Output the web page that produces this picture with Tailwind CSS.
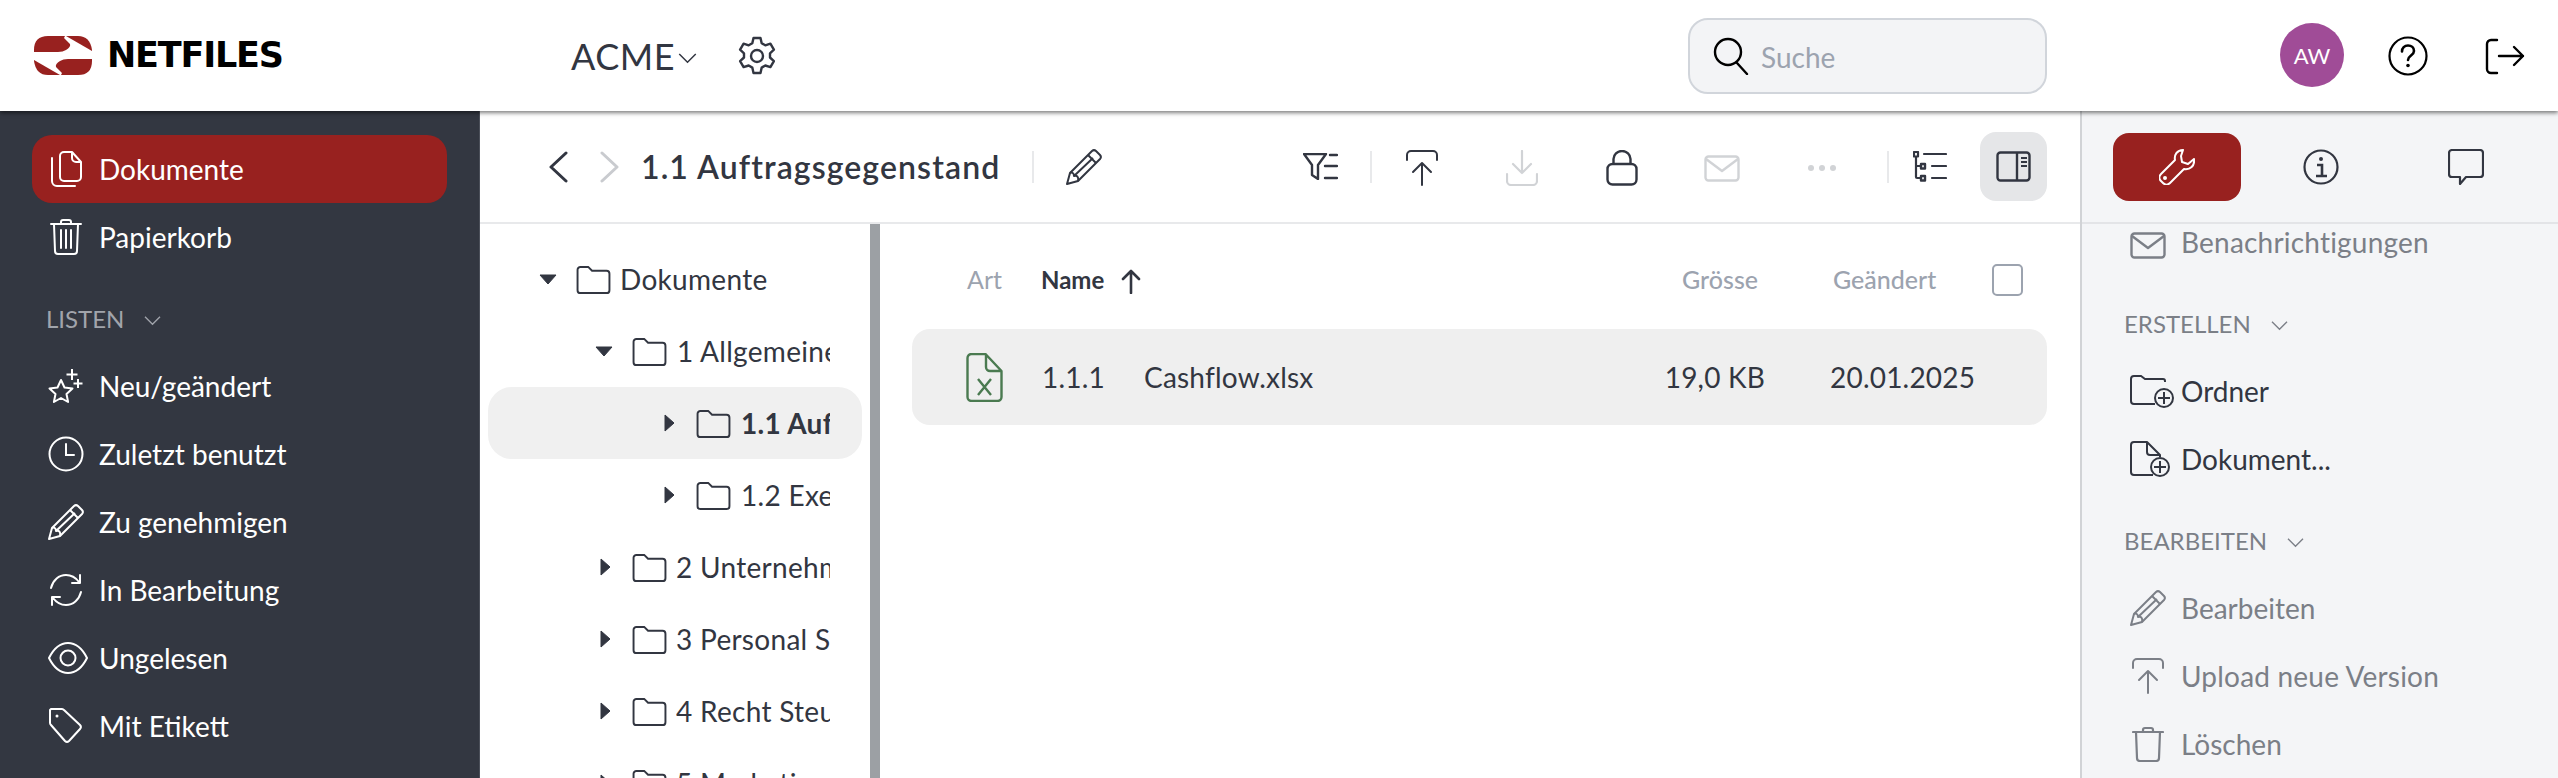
<!DOCTYPE html>
<html lang="de">
<head>
    <meta charset="UTF-8">
    <title>Netfiles</title>
    <script src="https://cdn.jsdelivr.net/npm/@tailwindcss/browser@4"></script>
</head>
<body class="font-['Lato',sans-serif] text-[#323641] bg-white">
    <svg class="hidden">
        <symbol id="folder" viewBox="0 0 36 30"><path d="M1.5 5a3 3 0 0 1 3-3h8l4 4h15a3 3 0 0 1 3 3v17a3 3 0 0 1-3 3h-27a3 3 0 0 1-3-3z" fill="none" stroke="currentColor" stroke-width="2"/></symbol>
        <symbol id="chev" viewBox="0 0 20 12"><path d="M1 1l9 9 9-9" fill="none" stroke="currentColor" stroke-width="1.6"/></symbol>
        <symbol id="tri-down" viewBox="0 0 18 11"><path d="M1 1h16l-8 9z" fill="currentColor" stroke="currentColor" stroke-linejoin="round"/></symbol>
        <symbol id="tri-right" viewBox="0 0 11 18"><path d="M1 1v16l9-8z" fill="currentColor" stroke="currentColor" stroke-linejoin="round"/></symbol>
        <symbol id="pencil" viewBox="0 0 36 36"><g fill="none" stroke="currentColor" stroke-width="2" stroke-linejoin="round"><path d="M1 35l3-11L26 2a3 3 0 0 1 4 0l4 4a3 3 0 0 1 0 4L12 32z"/><path d="M22 6l8 8M4 24c2-1 4 0 4 3 3-1 5 1 4 5M8 27L27 9"/></g></symbol>
        <symbol id="upload" viewBox="0 0 32 36"><g fill="none" stroke="currentColor" stroke-width="2" stroke-linecap="round" stroke-linejoin="round"><path d="M1 10V5a4 4 0 0 1 4-4h22a4 4 0 0 1 4 4v5"/><path d="M16 35V13M7 22l9-9 9 9"/></g></symbol>
    </svg>

    <div class="flex flex-col h-screen overflow-hidden">
        <!-- header -->
        <header class="relative z-10 flex items-center h-[111px] shrink-0 bg-white shadow-[0_2px_4px_rgba(0,0,0,0.5)]">
            <div class="flex items-center pl-[34px] w-[571px]">
                <svg class="w-[58px] h-[39px]" viewBox="0 0 58 39"><g fill="#98211f"><path d="M0 16v-2Q0 0 14 0H31L30 2l6 6Q37 11 32 14 29 16 24 16z"/><path d="M32 0H44Q56 0 58 14v1z"/><path d="M58 23v2q0 14-14 14H27l1-2-6-6q-1-3 4-6 3-2 8-2z"/><path d="M26 39H14Q2 39 0 25v-1z"/></g></svg>
                <span class="ml-[15px] text-[35px] leading-none font-bold tracking-[-1.2px] text-black font-['DejaVu_Sans',sans-serif]">NETFILES</span>
            </div>
            <span class="text-[36px] leading-none tracking-[0.5px]">ACME</span>
            <svg class="w-[21px] h-[11px] ml-[2px] mt-[5px]"><use href="#chev"/></svg>
            <svg class="w-[40px] h-[40px] ml-[39px]" viewBox="0 0 40 40" fill="none" stroke="currentColor" stroke-width="2.4" stroke-linejoin="round"><path d="M16.5 2h7l1.2 5.2 3.6 2.1 5.1-1.6 3.5 6-3.9 3.6v4.2l3.9 3.6-3.5 6-5.1-1.6-3.6 2.1-1.2 5.4h-7l-1.2-5.4-3.6-2.1-5.1 1.6-3.5-6 3.900-3.600v-4.200l-3.900-3.600 3.500-6 5.100 1.600 3.600-2.100z"/><circle cx="20" cy="20" r="6"/></svg>
            <div class="ml-auto mr-[511px] flex items-center w-[359px] h-[76px] bg-[#f3f4f6] border-[2px] border-[#d1d5db] rounded-[20px] pl-[23px]">
                <svg class="w-[36px] h-[38px] text-black" viewBox="0 0 36 38" fill="none" stroke="currentColor" stroke-width="2.4"><circle cx="15" cy="15" r="13"/><path d="M24 26l10 11" stroke-linecap="round"/></svg>
                <span class="ml-[12px] mt-[2px] text-[28px] text-[#9ca3af]">Suche</span>
            </div>
        </header>
        <div class="absolute top-[23px] left-[2280px] z-20 flex items-center">
            <div class="flex items-center justify-center w-[64px] h-[64px] rounded-full bg-[#a04c97] text-white text-[22px]">AW</div>
            <svg class="w-[40px] h-[40px] ml-[44px] mt-[2px] text-black" viewBox="0 0 40 40" fill="none" stroke="currentColor" stroke-width="2.2"><circle cx="20" cy="20" r="18.5"/><path d="M14 15.500c0-3.500 2.500-6 6-6s6 2.300 6 5.500c0 4.500-6 4.500-6 9" stroke-width="2.600" stroke-linecap="round"/><circle cx="20" cy="29.500" r="1.800" fill="currentColor" stroke="none"/></svg>
        </div>
        <svg class="absolute top-[38px] left-[2485px] z-20 w-[40px] h-[37px] text-black" viewBox="0 0 40 37" fill="none" stroke="currentColor" stroke-width="2.4" stroke-linecap="round" stroke-linejoin="round"><path d="M12 2H6a4 4 0 0 0-4 4v25a4 4 0 0 0 4 4h6M14 18h24M29 9l9 9-9 9"/></svg>

        <div class="flex flex-1 min-h-0">
            <!-- sidebar -->
            <aside class="w-[480px] shrink-0 bg-[#333741] border-r border-[#4b4f59] text-white text-[28px] pt-[24px] overflow-hidden">
                <a class="flex items-center h-[68px] mx-[32px] pl-[18px] bg-[#98211f] rounded-[20px]">
                    <svg class="w-[32px] h-[36px] mr-[17px]" viewBox="0 0 32 36" fill="none" stroke="currentColor" stroke-width="2" stroke-linejoin="round"><path d="M10 5a4 4 0 0 1 4-4h8l9 10v15a4 4 0 0 1-4 4H14a4 4 0 0 1-4-4zM22 1v6a4 4 0 0 0 4 4h5"/><path d="M2 7v23a5 5 0 0 0 5 5h18" stroke-linecap="round"/></svg>
                    <span>Dokumente</span>
                </a>
                <a class="flex items-center h-[68px] mx-[32px] pl-[18px]">
                    <svg class="w-[32px] h-[36px] mr-[17px]" viewBox="0 0 32 36" fill="none" stroke="currentColor" stroke-width="2" stroke-linecap="round" stroke-linejoin="round"><path d="M1 5h30M11 5V3a2 2 0 0 1 2-2h6a2 2 0 0 1 2 2v2M4 5l1 27a3 3 0 0 0 3 3h16a3 3 0 0 0 3-3l1-27M11 11v18M16 11v18M21 11v18"/></svg>
                    <span>Papierkorb</span>
                </a>
                <div class="flex items-center h-[66px] mt-[15px] pl-[46px] text-[24px] text-[#a1a4ab]">
                    <span>LISTEN</span>
                    <svg class="w-[17px] h-[10px] ml-[20px] mt-[3px]"><use href="#chev"/></svg>
                </div>
                <a class="flex items-center h-[68px] pl-[48px]">
                    <svg class="w-[36px] h-[36px] mr-[15px]" viewBox="0 0 36 36" fill="none" stroke="currentColor" stroke-width="2" stroke-linejoin="round"><path d="M13 12l3.500 7.500 8 1-6 5.500 1.600 8-7.100-4-7.100 4 1.600-8-6-5.500 8-1zM24 1v11M18.500 6.500h11M30 11v9M25.500 15.500h9"/></svg>
                    <span>Neu/geändert</span>
                </a>
                <a class="flex items-center h-[68px] pl-[48px]">
                    <svg class="w-[36px] h-[36px] mr-[15px]" viewBox="0 0 36 36" fill="none" stroke="currentColor" stroke-width="2" stroke-linecap="round"><circle cx="18" cy="18" r="16.500"/><path d="M18 8v11h8"/></svg>
                    <span>Zuletzt benutzt</span>
                </a>
                <a class="flex items-center h-[68px] pl-[48px]">
                    <svg class="w-[36px] h-[36px] mr-[15px]"><use href="#pencil"/></svg>
                    <span>Zu genehmigen</span>
                </a>
                <a class="flex items-center h-[68px] pl-[48px]">
                    <svg class="w-[36px] h-[36px] mr-[15px]" viewBox="0 0 36 36" fill="none" stroke="currentColor" stroke-width="2" stroke-linecap="round" stroke-linejoin="round"><path d="M3 16C5 8 11 3 18 3c6 0 10 3 13 7M33 20c-2 8-8 13-15 13-6 0-10-3-13-7M32 3v8h-8M4 33v-8h8"/></svg>
                    <span>In Bearbeitung</span>
                </a>
                <a class="flex items-center h-[68px] pl-[48px]">
                    <svg class="w-[40px] h-[32px] mr-[11px]" viewBox="0 0 40 32" fill="none" stroke="currentColor" stroke-width="2"><path d="M1 16C6 6 13 1 20 1s14 5 19 15c-5 10-12 15-19 15S6 26 1 16z"/><circle cx="20" cy="16" r="7.500"/></svg>
                    <span>Ungelesen</span>
                </a>
                <a class="flex items-center h-[68px] pl-[48px]">
                    <svg class="w-[36px] h-[36px] mr-[15px]" viewBox="0 0 36 36" fill="none" stroke="currentColor" stroke-width="2" stroke-linejoin="round"><path d="M3 1h11a3 3 0 0 1 2 1l16 15a3 3 0 0 1 0 4L21 33a3 3 0 0 1-4 0L3 17a3 3 0 0 1-1-2V2z"/><circle cx="9" cy="8" r="1.500" fill="currentColor" stroke="none"/></svg>
                    <span>Mit Etikett</span>
                </a>
            </aside>

            <!-- main -->
            <main class="flex flex-col flex-1 min-w-0">
                <div class="flex items-center h-[113px] shrink-0 pl-[68px] pr-[33px] border-b-2 border-[#e8e9eb]">
                    <svg class="w-[20px] h-[32px]" viewBox="0 0 20 32" fill="none" stroke="currentColor" stroke-width="3" stroke-linecap="round" stroke-linejoin="round"><path d="M18 2L3 16l15 14"/></svg>
                    <svg class="w-[20px] h-[32px] ml-[32px] text-[#c9cbcf]" viewBox="0 0 20 32" fill="none" stroke="currentColor" stroke-width="3" stroke-linecap="round" stroke-linejoin="round"><path d="M2 2l15 14L2 30"/></svg>
                    <span class="ml-[21px] w-[391px] text-[32px] font-semibold tracking-[1.1px] whitespace-nowrap">1.1 Auftragsgegenstand</span>
                    <span class="w-[2px] h-[32px] bg-[#e8e9eb]"></span>
                    <svg class="w-[36px] h-[36px] ml-[32px]"><use href="#pencil"/></svg>
                    <div class="ml-auto flex items-center">
                        <svg class="w-[35px] h-[27px]" viewBox="0 0 35 27" fill="none" stroke="currentColor" stroke-width="2.400" stroke-linecap="round" stroke-linejoin="round"><path d="M1 1h22l-8 11v14l-6-4V12zM27 2h7M22 13h12M22 25h12"/></svg>
                        <span class="w-[2px] h-[32px] bg-[#e8e9eb] ml-[32px]"></span>
                        <div class="flex items-center justify-center w-[100px]"><svg class="w-[32px] h-[36px] mt-[3px]"><use href="#upload"/></svg></div>
                        <div class="flex items-center justify-center w-[100px] text-[#d1d3d6]">
                            <svg class="w-[32px] h-[36px] mt-[3px]" viewBox="0 0 32 36" fill="none" stroke="currentColor" stroke-width="2.200" stroke-linecap="round" stroke-linejoin="round"><path d="M16 1v22M7 14l9 9 9-9M1 24v7a4 4 0 0 0 4 4h22a4 4 0 0 0 4-4v-7"/></svg>
                        </div>
                        <div class="flex items-center justify-center w-[100px]">
                            <svg class="w-[32px] h-[36px] mt-[3px]" viewBox="0 0 32 36" fill="none" stroke="currentColor" stroke-width="2.400"><rect x="1.500" y="14" width="29" height="20.500" rx="5"/><path d="M7.500 14V9a8.500 8 0 0 1 17 0v5"/></svg>
                        </div>
                        <div class="flex items-center justify-center w-[100px] text-[#d1d3d6]">
                            <svg class="w-[36px] h-[27px] mt-[3px]" viewBox="0 0 36 27" fill="none" stroke="currentColor" stroke-width="2.400" stroke-linejoin="round"><rect x="1.500" y="1.500" width="33" height="24" rx="3"/><path d="M2 4l16 12L34 4"/></svg>
                        </div>
                        <div class="flex items-center justify-center w-[100px] gap-[5px] mt-[3px]">
                            <span class="w-[6px] h-[6px] rounded-full bg-[#d1d3d6]"></span>
                            <span class="w-[6px] h-[6px] rounded-full bg-[#d1d3d6]"></span>
                            <span class="w-[6px] h-[6px] rounded-full bg-[#d1d3d6]"></span>
                        </div>
                        <span class="w-[2px] h-[32px] bg-[#e8e9eb] ml-[15px]"></span>
                        <svg class="w-[34px] h-[31px] ml-[24px]" viewBox="0 0 34 31" fill="none" stroke="currentColor" stroke-width="2.200" stroke-linecap="round" stroke-linejoin="round"><rect x="1" y="1" width="4" height="4.500"/><rect x="8" y="13" width="4" height="4.500" stroke-width="2.400"/><rect x="8" y="25" width="4" height="4.500" stroke-width="2.400"/><path d="M3 6v20a1 1 0 0 0 1 1h4M3 15h5M11 3h22M19 15h14M19 27h14"/></svg>
                        <div class="flex items-center justify-center w-[67px] h-[69px] ml-[33px] bg-[#e5e6e8] rounded-[16px]">
                            <svg class="w-[35px] h-[31px]" viewBox="0 0 35 31" fill="none" stroke="currentColor" stroke-width="2.400" stroke-linejoin="round"><rect x="1.500" y="1.500" width="32" height="28" rx="3"/><path d="M21 1.500v28"/><path d="M25 7h6M25 11h6M25 15h6" stroke-width="2"/></svg>
                        </div>
                    </div>
                </div>

                <div class="flex flex-1 min-h-0">
                    <!-- tree -->
                    <div class="w-[390px] shrink-0 px-[8px] pt-[19px] text-[28px] tracking-[0.3px] overflow-hidden">
                        <div class="flex items-center h-[72px] rounded-[24px] pl-[51px] pr-[32px]">
                            <svg class="w-[18px] h-[11px] mr-[19px] shrink-0"><use href="#tri-down"/></svg>
                            <svg class="w-[35px] h-[29px] shrink-0"><use href="#folder"/></svg>
                            <span class="ml-[9px] whitespace-nowrap overflow-hidden">Dokumente</span>
                        </div>
                        <div class="flex items-center h-[72px] rounded-[24px] pl-[107px] pr-[32px]">
                            <svg class="w-[18px] h-[11px] mr-[19px] shrink-0"><use href="#tri-down"/></svg>
                            <svg class="w-[35px] h-[29px] shrink-0"><use href="#folder"/></svg>
                            <span class="ml-[10px] whitespace-nowrap overflow-hidden">1 Allgemeines</span>
                        </div>
                        <div class="flex items-center h-[72px] rounded-[24px] pl-[176px] pr-[32px] bg-[#f0f0f0]">
                            <svg class="w-[11px] h-[18px] mr-[21px] shrink-0"><use href="#tri-right"/></svg>
                            <svg class="w-[35px] h-[29px] shrink-0"><use href="#folder"/></svg>
                            <span class="ml-[10px] font-bold whitespace-nowrap overflow-hidden">1.1 Auftragsgegenstand</span>
                        </div>
                        <div class="flex items-center h-[72px] rounded-[24px] pl-[176px] pr-[32px]">
                            <svg class="w-[11px] h-[18px] mr-[21px] shrink-0"><use href="#tri-right"/></svg>
                            <svg class="w-[35px] h-[29px] shrink-0"><use href="#folder"/></svg>
                            <span class="ml-[10px] whitespace-nowrap overflow-hidden">1.2 Executive Summary</span>
                        </div>
                        <div class="flex items-center h-[72px] rounded-[24px] pl-[112px] pr-[32px]">
                            <svg class="w-[11px] h-[18px] mr-[21px] shrink-0"><use href="#tri-right"/></svg>
                            <svg class="w-[35px] h-[29px] shrink-0"><use href="#folder"/></svg>
                            <span class="ml-[9px] whitespace-nowrap overflow-hidden">2 Unternehmen</span>
                        </div>
                        <div class="flex items-center h-[72px] rounded-[24px] pl-[112px] pr-[32px]">
                            <svg class="w-[11px] h-[18px] mr-[21px] shrink-0"><use href="#tri-right"/></svg>
                            <svg class="w-[35px] h-[29px] shrink-0"><use href="#folder"/></svg>
                            <span class="ml-[9px] whitespace-nowrap overflow-hidden">3 Personal Struktur</span>
                        </div>
                        <div class="flex items-center h-[72px] rounded-[24px] pl-[112px] pr-[32px]">
                            <svg class="w-[11px] h-[18px] mr-[21px] shrink-0"><use href="#tri-right"/></svg>
                            <svg class="w-[35px] h-[29px] shrink-0"><use href="#folder"/></svg>
                            <span class="ml-[9px] whitespace-nowrap overflow-hidden">4 Recht Steuern</span>
                        </div>
                        <div class="flex items-center h-[72px] rounded-[24px] pl-[112px] pr-[32px]">
                            <svg class="w-[11px] h-[18px] mr-[21px] shrink-0"><use href="#tri-right"/></svg>
                            <svg class="w-[35px] h-[29px] shrink-0"><use href="#folder"/></svg>
                            <span class="ml-[9px] whitespace-nowrap overflow-hidden">5 Marketing</span>
                        </div>
                    </div>
                    <!-- splitter -->
                    <div class="w-[10px] shrink-0 bg-[#9ca0a4]"></div>
                    <!-- table -->
                    <div class="flex-1 min-w-0 pl-[32px] pr-[33px]">
                        <div class="flex items-center h-[105px] pl-[55px] pr-[24px] pt-[7px] text-[25px] text-[#9ca3af]">
                            <span class="w-[74px]">Art</span>
                            <span class="font-bold text-[24px] text-[#323641]">Name</span>
                            <svg class="w-[20px] h-[25px] ml-[17px] mt-[2px] text-[#323641]" viewBox="0 0 20 25" fill="none" stroke="currentColor" stroke-width="2.600" stroke-linecap="round" stroke-linejoin="round"><path d="M10 24V2M2 10l8-8 8 8"/></svg>
                            <span class="ml-auto w-[100px] text-right font-medium">Grösse</span>
                            <span class="ml-[75px] w-[103px] font-medium">Geändert</span>
                            <span class="ml-[56px] w-[31px] h-[32px] rounded-[5px] border-[2px] border-[#9ca3af]"></span>
                        </div>
                        <div class="flex items-center h-[96px] pl-[54px] pr-[70px] bg-[#efefef] rounded-[18px] text-[28px] tracking-[0.2px]">
                            <svg class="w-[37px] h-[49px] mr-[39px] text-[#4a7a50]" viewBox="0 0 37 49" fill="none" stroke="currentColor" stroke-width="2.400" stroke-linejoin="round"><path d="M1.500 5a4 4 0 0 1 4-4h14l16 17v26a4 4 0 0 1-4 4h-26a4 4 0 0 1-4-4zM20 1v13a4 4 0 0 0 4 4h11"/><path d="M12 26l13 16M25 26L12 42"/></svg>
                            <span class="w-[102px]">1.1.1</span>
                            <span>Cashflow.xlsx</span>
                            <span class="ml-auto w-[120px] text-right whitespace-nowrap">19,0 KB</span>
                            <span class="ml-[65px] w-[147px] whitespace-nowrap">20.01.2025</span>
                        </div>
                    </div>
                </div>
            </main>

            <!-- right panel -->
            <aside class="w-[478px] shrink-0 flex flex-col bg-[#f4f5f7] border-l-[2px] border-[#d1d3d6]">
                <div class="flex items-center h-[113px] shrink-0 pl-[31px] border-b-2 border-[#e3e4e7]">
                    <div class="flex items-center justify-center w-[128px] h-[68px] bg-[#98211f] rounded-[16px] text-white">
                        <svg class="w-[36px] h-[36px]" viewBox="0 0 36 36" fill="none" stroke="currentColor" stroke-width="2" stroke-linejoin="round"><path d="M24 1c-6 0-9 5-8 10L2 25c-2 2-2 5 0 7l2 2c2 2 5 2 7 0l14-14c6 1 11-3 10-10l-6 5-6-2-1-6z"/><circle cx="6" cy="29" r="1" fill="currentColor"/></svg>
                    </div>
                    <div class="flex items-center justify-center w-[144px] ml-[8px] mr-[1px] text-[#323641]">
                        <svg class="w-[36px] h-[36px]" viewBox="0 0 36 36" fill="none" stroke="currentColor" stroke-width="2.200"><circle cx="18" cy="18" r="16.500"/><path d="M14 16h5v11M13 27h11" stroke-width="2.600"/><circle cx="18" cy="10" r="2" fill="currentColor" stroke="none"/></svg>
                    </div>
                    <div class="flex items-center justify-center w-[144px] text-[#323641]">
                        <svg class="w-[36px] h-[36px]" viewBox="0 0 36 36" fill="none" stroke="currentColor" stroke-width="2.200" stroke-linejoin="round"><path d="M4 1h28a3 3 0 0 1 3 3v21a3 3 0 0 1-3 3H18l-6 7v-7H4a3 3 0 0 1-3-3V4a3 3 0 0 1 3-3z"/></svg>
                    </div>
                </div>
                <div class="flex-1 min-h-0 overflow-hidden text-[28px] pl-[48px] text-[#7b7f87]">
                    <div class="flex items-center h-[36px]">
                        <svg class="w-[36px] h-[27px] mr-[15px] mt-[6px]" viewBox="0 0 36 27" fill="none" stroke="currentColor" stroke-width="2.400" stroke-linejoin="round"><rect x="1.500" y="1.500" width="33" height="24" rx="3"/><path d="M2 4l16 12L34 4"/></svg>
                        <span class="tracking-[0.2px]">Benachrichtigungen</span>
                    </div>
                    <div class="flex items-center h-[66px] mt-[31px] -ml-[6px] text-[24px]">
                        <span>ERSTELLEN</span>
                        <svg class="w-[17px] h-[10px] ml-[20px] mt-[3px]"><use href="#chev"/></svg>
                    </div>
                    <div class="flex items-center h-[68px] text-[#323641]">
                        <svg class="w-[44px] h-[33px] mr-[7px]" viewBox="0 0 44 33" fill="none" stroke="currentColor" stroke-width="2"><path d="M35 7V6a2 2 0 0 0-2-2H15l-4-3H4a3 3 0 0 0-3 3v22a3 3 0 0 0 3 3h21"/><circle cx="34" cy="23" r="9"/><path d="M34 17v12M28 23h12"/></svg>
                        <span>Ordner</span>
                    </div>
                    <div class="flex items-center h-[68px] text-[#323641]">
                        <svg class="w-[40px] h-[36px] mr-[11px]" viewBox="0 0 40 36" fill="none" stroke="currentColor" stroke-width="2" stroke-linejoin="round"><path d="M23 34H4a3 3 0 0 1-3-3V4a3 3 0 0 1 3-3h13l13 13v2M17 1v10a3 3 0 0 0 3 3h10"/><circle cx="30" cy="26" r="9"/><path d="M30 20v12M24 26h12"/></svg>
                        <span>Dokument...</span>
                    </div>
                    <div class="flex items-center h-[66px] mt-[15px] -ml-[6px] text-[24px]">
                        <span>BEARBEITEN</span>
                        <svg class="w-[17px] h-[10px] ml-[20px] mt-[3px]"><use href="#chev"/></svg>
                    </div>
                    <div class="flex items-center h-[68px]">
                        <svg class="w-[36px] h-[36px] mr-[15px]"><use href="#pencil"/></svg>
                        <span>Bearbeiten</span>
                    </div>
                    <div class="flex items-center h-[68px]">
                        <svg class="w-[32px] h-[36px] ml-[2px] mr-[17px]"><use href="#upload"/></svg>
                        <span class="tracking-[0.2px]">Upload neue Version</span>
                    </div>
                    <div class="flex items-center h-[68px]">
                        <svg class="w-[32px] h-[36px] ml-[2px] mr-[17px]" viewBox="0 0 32 36" fill="none" stroke="currentColor" stroke-width="2.200" stroke-linecap="round" stroke-linejoin="round"><path d="M1 6h30M11 6V4a2 2 0 0 1 2-2h6a2 2 0 0 1 2 2v2M4 6l1 26a3 3 0 0 0 3 3h16a3 3 0 0 0 3-3l1-26"/></svg>
                        <span>Löschen</span>
                    </div>
                </div>
            </aside>
        </div>
    </div>
</body>
</html>
